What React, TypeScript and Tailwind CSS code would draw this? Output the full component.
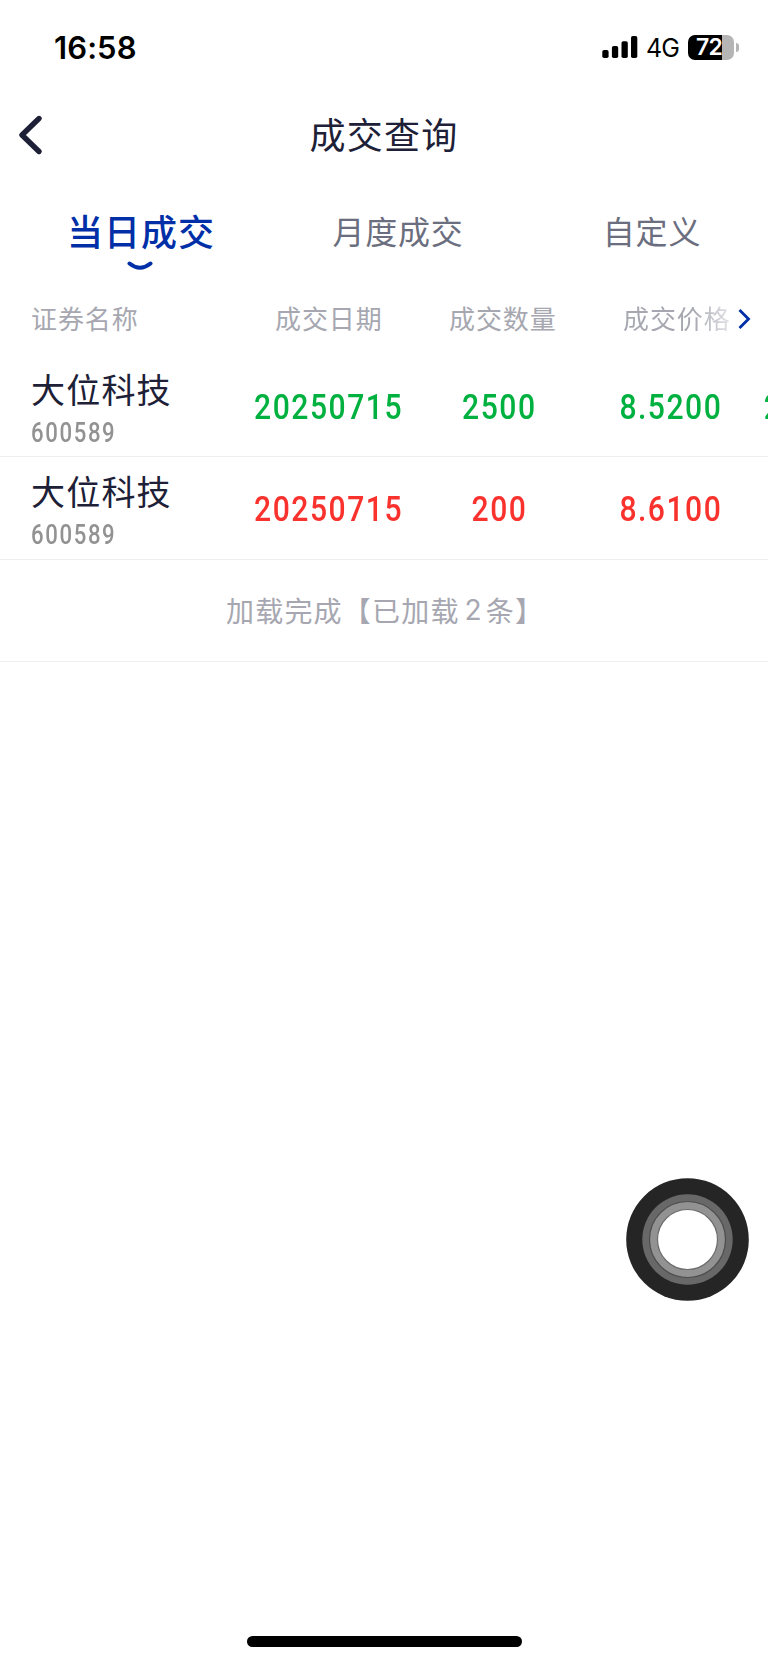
import React from "react";

const cjk = "font-['Noto_Sans_CJK_SC',sans-serif]";

type Trade = {
  name: string;
  code: string;
  date: string;
  quantity: string;
  price: string;
  amount: string;
  color: string;
};

const trades: Trade[] = [
  { name: "大位科技", code: "600589", date: "20250715", quantity: "2500", price: "8.5200", amount: "2", color: "text-[#00b140]" },
  { name: "大位科技", code: "600589", date: "20250715", quantity: "200", price: "8.6100", amount: "", color: "text-[#fa322d]" },
];

function StatusBar() {
  return (
    <header className="flex h-[94px] items-center justify-between pl-[54px] pr-[29px] text-black">
      <time className="font-['Inter',sans-serif] text-[31px] font-semibold leading-none tracking-[0.1px]">16:58</time>
      <div className="flex items-center">
        <svg className="block" width="36" height="24" viewBox="0 0 36 24" fill="currentColor">
          <rect x="0.3" y="15" width="6.3" height="8" rx="1.8" />
          <rect x="9.9" y="11" width="6.3" height="12" rx="1.8" />
          <rect x="19.5" y="6.2" width="6.3" height="16.8" rx="1.8" />
          <rect x="29" y="1" width="6.3" height="22" rx="1.8" />
        </svg>
        <span className="ml-[8px] mt-[3px] w-[34px] whitespace-nowrap font-['Inter',sans-serif] text-[25px] leading-none tracking-[-1px]">4G</span>
        <div className="ml-[8px] flex h-[25px] w-[46px] items-center rounded-[7px] bg-[linear-gradient(90deg,#000_73%,#b5b5b5_73%)] pl-[8px]">
          <span className="whitespace-nowrap font-['Inter',sans-serif] text-[23px] font-semibold leading-[24px] tracking-[-0.8px] text-white">72</span>
        </div>
        <span className="ml-[2px] h-[9px] w-[3px] rounded-r-full bg-[#b5b5b5]" />
      </div>
    </header>
  );
}

function TitleBar() {
  return (
    <div className="grid h-[82px] grid-cols-[100px_1fr_100px] items-center">
      <button aria-label="返回" className="pl-[17px]">
        <svg className="block" width="26" height="42" viewBox="0 0 26 42" fill="none" stroke="#1d2036" strokeWidth="5.4" strokeLinecap="round" strokeLinejoin="round">
          <path d="M22 4.5L5 21L22 37.5" />
        </svg>
      </button>
      <h1 className="pb-[4px] text-center text-[36px] leading-none tracking-[1.2px] text-[#1d2036]">成交查询</h1>
    </div>
  );
}

function Tabs() {
  return (
    <nav className="flex h-[108px] items-start pl-[66px] pt-[36px] text-[32px] leading-[36px] tracking-[0.8px] text-[#6b6e7e]">
      <button className="flex w-[150px] flex-col items-center text-[36px] font-medium tracking-[1px] text-[#002fa7]">
        <span>当日成交</span>
        <svg className="mr-[2px] mt-[13px] block" width="26" height="10" viewBox="0 0 26 10" fill="none" stroke="currentColor" strokeWidth="4" strokeLinecap="round">
          <path d="M2.5 2.5Q13 11 23.5 2.5" />
        </svg>
      </button>
      <button className="ml-[116px] w-[132px]">月度成交</button>
      <button className="ml-[138px] w-[100px]">自定义</button>
    </nav>
  );
}

function TableHeader() {
  return (
    <div className="flex h-[71px] items-center pb-[3px] pl-[31px] text-[26px] leading-none tracking-[0.9px] text-[#a6a7b0]">
      <span className="w-[244px]">证券名称</span>
      <span className="w-[174px]">成交日期</span>
      <span className="w-[174px]">成交数量</span>
      <span className="w-[109px] whitespace-nowrap bg-[linear-gradient(90deg,#a6a7b0_65%,#e6e6ea_100%)] bg-clip-text text-transparent">成交价格</span>
      <svg className="ml-[5px] mt-[2px] block" width="14" height="22" viewBox="0 0 14 22" fill="none" stroke="#002fa7" strokeWidth="2.8">
        <path d="M2.5 2L11.5 11L2.5 20" />
      </svg>
    </div>
  );
}

function Figure({ value }: { value: string }) {
  return (
    <span className="flex justify-center">
      <span className="inline-block scale-x-[0.86] whitespace-nowrap">{value}</span>
    </span>
  );
}

function TradeRow({ trade }: { trade: Trade }) {
  return (
    <div className="flex h-[102.3px] overflow-hidden border-b border-[#efeff1]">
      <div className="w-[243px] shrink-0 pl-[31px] pt-[16px]">
        <div className="text-[34px] leading-[36px] tracking-[1.2px] text-[#1d2036]">{trade.name}</div>
        <div className="mt-[12px] origin-left scale-x-[0.82] font-['Roboto',sans-serif] text-[27px] font-medium leading-[28px] tracking-[2px] text-[#929292]">{trade.code}</div>
      </div>
      <div className={`grid shrink-0 grid-cols-[171px_171px_171px_150px] pt-[32px] font-['Roboto',sans-serif] text-[35px] font-medium leading-[42px] tracking-[1.75px] ${trade.color}`}>
        <Figure value={trade.date} />
        <Figure value={trade.quantity} />
        <Figure value={trade.price} />
        <span className="origin-left scale-x-[0.86] pl-[9px]">{trade.amount}</span>
      </div>
    </div>
  );
}

export default function App() {
  return (
    <main className={`relative flex h-[1663px] w-[768px] flex-col overflow-hidden bg-white ${cjk}`}>
      <StatusBar />
      <TitleBar />
      <Tabs />
      <TableHeader />
      <section>
        {trades.map((trade, index) => (
          <TradeRow key={index} trade={trade} />
        ))}
        <div className="flex h-[102.3px] items-center border-b border-[#efeff1] pl-[226px] text-[28px] leading-none tracking-[1.2px] text-[#a6a7b0]">
          加载完成【已加载<span className="ml-[5px] mr-[4px] font-['Inter',sans-serif] tracking-normal">2</span>条】
        </div>
      </section>
      <div className="mb-[16px] mt-auto flex justify-center">
        <div className="h-[11px] w-[275px] rounded-full bg-black" />
      </div>
      <svg className="absolute left-[626px] top-[1178px]" width="123" height="123" viewBox="0 0 123 123">
        <circle cx="61.5" cy="61.5" r="61.3" fill="#252525" />
        <circle cx="61.5" cy="61.5" r="45.2" fill="#686868" />
        <circle cx="61.5" cy="61.5" r="38" fill="#929292" stroke="#4c4c4c" strokeWidth="1.2" />
        <circle cx="61.5" cy="61.5" r="30" fill="#fff" stroke="#6c6c6c" strokeWidth="1.2" />
      </svg>
    </main>
  );
}
